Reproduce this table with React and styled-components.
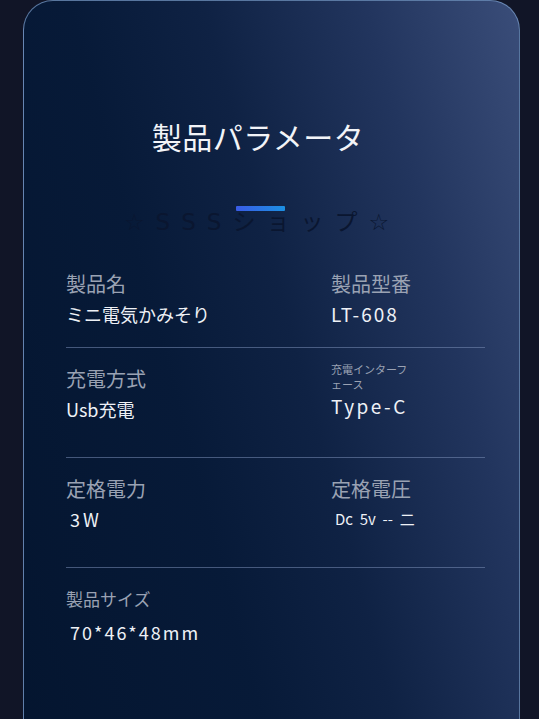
import React from "react";
import styled, { createGlobalStyle } from "styled-components";

const specs = [
  {
    pad: 20,
    cells: [
      { label: "製品名", value: "ミニ電気かみそり" },
      { label: "製品型番", value: "LT-608", spacing: 2, size: 19 },
    ],
  },
  {
    pad: 35,
    cells: [
      { label: "充電方式", value: "Usb充電" },
      { label: ["充電インターフ", "ェース"], small: true, value: "Type-C", spacing: 2.5, size: 19 },
    ],
  },
  {
    pad: 35,
    cells: [
      { label: "定格電力", value: "3W", spacing: 3, indent: 4 },
      { label: "定格電圧", value: "Dc  5v  --  二", size: 15, indent: 4 },
    ],
  },
  {
    pad: 40,
    last: true,
    gap: 6,
    cells: [{ label: "製品サイズ", labelSize: 17, value: "70*46*48mm", spacing: 2, indent: 4 }],
  },
];

export default function App() {
  return (
    <>
      <Global />
      <Page>
        <Card>
          <Header>
            <Title>製品パラメータ</Title>
            <Bar />
            <Watermark>☆SSSショップ☆</Watermark>
          </Header>

          <List>
            {specs.map((row, i) => (
              <Row key={i} $pad={row.pad} $last={row.last}>
                {row.cells.map((c, j) => (
                  <Cell key={j} $gap={row.gap}>
                    <Label $small={c.small} $size={c.labelSize}>
                      {Array.isArray(c.label)
                        ? c.label.map((l, k) => <span key={k}>{l}</span>)
                        : c.label}
                    </Label>
                    <Value $spacing={c.spacing} $size={c.size} $indent={c.indent}>
                      {c.value}
                    </Value>
                  </Cell>
                ))}
              </Row>
            ))}
          </List>
        </Card>
      </Page>
    </>
  );
}

//styles

const font = `"Noto Sans CJK JP", "Noto Sans", sans-serif`;

const Global = createGlobalStyle`
  html, body {
    margin: 0;
    padding: 0;
    background: #111527;
    overflow: hidden;
  }
`;

const Page = styled.div`
  height: 719px;
  padding: 0 19px 0 23px;
  background: #111527;
  font-family: ${font};
  overflow: hidden;
`;

const Card = styled.div`
  min-height: 780px;
  box-sizing: border-box;
  border: 1.5px solid rgba(125, 160, 205, 0.7);
  border-bottom: none;
  border-radius: 30px 30px 0 0;
  padding: 113px 34px 0 42px;
  background:
    linear-gradient(75deg, #04152f 0%, #071a38 36%, #0f2244 55%, #22355e 78%, #3a4d79 100%);
`;

const Header = styled.div`
  display: flex;
  flex-direction: column;
  align-items: center;
  margin-left: -35px;
`;

const Title = styled.h1`
  margin: 0;
  font-size: 30px;
  line-height: 44px;
  font-weight: 400;
  color: #f2f4f8;
  letter-spacing: 0.5px;
`;

const Bar = styled.div`
  position: relative;
  z-index: 1;
  width: 49px;
  height: 5px;
  margin: 48px 0 0 4px;
  border-radius: 1px;
  background: linear-gradient(90deg, #3a5ce6, #1c90e2);
`;

const Watermark = styled.div`
  margin: -5px 0 0 8px;
  font-size: 23px;
  line-height: 32px;
  letter-spacing: 11px;
  color: #0a1630;
  font-family: "DejaVu Sans", ${font};
`;

const List = styled.div`
  margin-top: 32px;
`;

const Row = styled.div`
  display: grid;
  grid-template-columns: 265px 1fr;
  padding: 17px 0 ${({ $pad }) => $pad}px;
  border-bottom: ${({ $last }) => ($last ? "none" : "1px solid rgba(120, 140, 180, 0.55)")};
  &:first-child {
    padding-top: 0;
  }
`;

const Cell = styled.div`
  display: flex;
  flex-direction: column;
  gap: ${({ $gap }) => $gap || 3}px;
`;

const Label = styled.div`
  height: 28px;
  display: flex;
  flex-direction: column;
  justify-content: ${({ $small }) => ($small ? "flex-start" : "center")};
  font-size: ${({ $small, $size }) => ($small ? 11 : $size || 20)}px;
  line-height: ${({ $small }) => ($small ? "15px" : "28px")};
  color: #9aa2b3;
  margin-top: ${({ $small }) => ($small ? -3 : 0)}px;
`;

const Value = styled.div`
  font-size: ${({ $size }) => $size || 18}px;
  line-height: 26px;
  color: #eef1f6;
  letter-spacing: ${({ $spacing }) => $spacing || 0}px;
  padding-left: ${({ $indent }) => $indent || 0}px;
  white-space: pre;
`;
